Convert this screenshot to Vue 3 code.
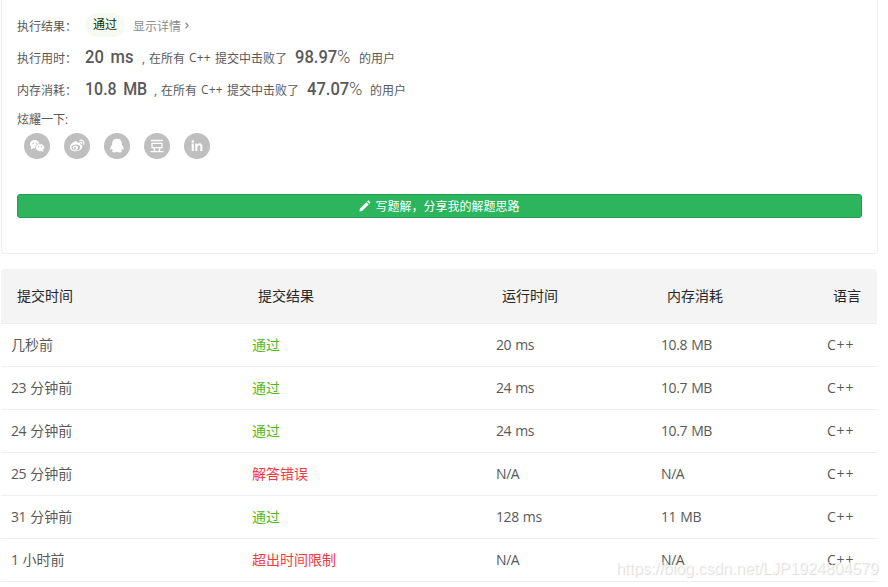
<script setup>
const stats = [
  { label: '执行用时：', value: '20 ms', percent: '98.97', cls: 'runtime' },
  { label: '内存消耗：', value: '10.8 MB', percent: '47.07', cls: 'memory' },
]

const rows = [
  { unit: '几秒前', ok: true, result: '通过', time: '20 ms', memory: '10.8 MB' },
  { num: '23', unit: '分钟前', ok: true, result: '通过', time: '24 ms', memory: '10.7 MB' },
  { num: '24', unit: '分钟前', ok: true, result: '通过', time: '24 ms', memory: '10.7 MB' },
  { num: '25', unit: '分钟前', ok: false, result: '解答错误', time: 'N/A', memory: 'N/A' },
  { num: '31', unit: '分钟前', ok: true, result: '通过', time: '128 ms', memory: '11 MB' },
  { num: '1', unit: '小时前', ok: false, result: '超出时间限制', time: 'N/A', memory: 'N/A' },
]
</script>

<template>
  <main class="page">
    <section class="card">
      <div class="line result">
        <span class="label">执行结果：</span>
        <span class="badge">通过</span>
        <a class="detail">显示详情
          <svg width="4" height="7" viewBox="0 0 4 7"><path d="M.6.8 3.2 3.5.6 6.2" fill="none" stroke="currentColor" stroke-width="1.3" /></svg>
        </a>
      </div>
      <div v-for="s in stats" :key="s.label" class="line stat" :class="s.cls">
        <span class="label">{{ s.label }}</span>
        <span class="value"><b>{{ s.value }}</b></span>
        <span class="comma">,</span>
        <span class="middle"><span>在所有</span><span class="lang">C++</span><span>提交中击败了</span></span>
        <span class="percent"><b>{{ s.percent }}</b><i>%</i></span>
        <span>的用户</span>
      </div>
      <div class="line flaunt">炫耀一下:</div>
      <div class="socials">
        <svg viewBox="0 0 26 26">
          <circle cx="13" cy="13" r="13" />
          <ellipse cx="10.7" cy="11.3" rx="4.8" ry="4.2" class="w" />
          <path d="m7.3 14-.7 2.6 3-1.6z" class="w" />
          <ellipse cx="16" cy="14.6" rx="4.6" ry="3.9" class="w edge" />
          <path d="m17 17.8 2.4 1.2-.5-2.3z" class="w" />
          <circle cx="9.2" cy="10.2" r=".7" /><circle cx="12.5" cy="10.2" r=".7" />
          <circle cx="14.5" cy="13.7" r=".6" /><circle cx="17.6" cy="13.7" r=".6" />
        </svg>
        <svg viewBox="0 0 26 26">
          <circle cx="13" cy="13" r="13" />
          <path class="w" d="M11.5 8.2c1.2-.3 2 .2 1.7 1.8 2-.8 3.8-.5 3.1 1.3 1.7.5 2.4 1.5 2.1 2.8-.5 2.3-3.2 4.1-6.7 4.1-3.4 0-5.8-1.5-5.8-3.8 0-2.7 3.1-5.7 5.6-6.2z" />
          <ellipse cx="11.8" cy="14.4" rx="4.3" ry="2.9" />
          <ellipse cx="11.4" cy="14.6" rx="2.6" ry="2.2" class="w" />
          <circle cx="10.9" cy="15" r="1" />
          <path class="s" d="M15.4 7.3c3-.7 5.2 1.5 4.3 4.3M15.8 9.3c1.4-.3 2.4.7 2 1.9" />
        </svg>
        <svg viewBox="0 0 26 26">
          <circle cx="13" cy="13" r="13" />
          <path class="w" d="M13 5.8c-3 0-4.8 1.8-4.8 4.5v1.2c-1.4 1.7-2.2 3.4-1.8 5 .3.5 1-.1 1.5-.8.2.8.6 1.4 1.1 1.9-.7.4-1 .8-.9 1.2.4.8 3.3.8 4.9 0 1.6.8 4.5.8 4.9 0 .1-.4-.2-.8-.9-1.2.5-.5.9-1.1 1.1-1.9.5.7 1.2 1.3 1.5.8.4-1.6-.4-3.3-1.8-5v-1.2c0-2.7-1.8-4.5-4.8-4.5z" />
        </svg>
        <svg viewBox="0 0 26 26">
          <circle cx="13" cy="13" r="13" />
          <path class="s bean" d="M7 7.5h12M8 10.4h10v4.3H8zM9.9 15.2l1.1 3M16.1 15.2l-1.1 3M6.5 18.6h13" />
        </svg>
        <svg viewBox="0 0 26 26">
          <circle cx="13" cy="13" r="13" />
          <path class="w" d="M7.7 10.5h2.1v7.5H7.7zM11.3 10.5h2.1v1c1.4-1.9 5-1.5 5 1.9V18h-2.1v-4.1c0-2.1-2.9-2-2.9.1v4h-2.1z" />
          <circle class="w" cx="8.75" cy="8.4" r="1.25" />
        </svg>
      </div>
      <button class="write">
        <svg width="12" height="12" viewBox="0 0 12 12"><path fill="#fff" d="m.8 8.8 6.6-6.6 2.3 2.3-6.6 6.6-2.6.4zM8.1 1.5l.7-.7c.4-.4.8-.4 1.2 0l1.1 1.1c.4.4.4.8 0 1.2l-.7.7z" /></svg>
        <span>写题解，分享我的解题思路</span>
      </button>
    </section>

    <section class="table">
      <div class="row head">
        <span>提交时间</span><span>提交结果</span><span>运行时间</span><span>内存消耗</span><span>语言</span>
      </div>
      <div v-for="(r, i) in rows" :key="i" class="row">
        <span class="ago"><span v-if="r.num" class="num">{{ r.num }}</span><span class="unit">{{ r.unit }}</span></span>
        <span :class="r.ok ? 'ok' : 'bad'">{{ r.result }}</span>
        <span class="num">{{ r.time }}</span>
        <span class="num">{{ r.memory }}</span>
        <span class="num cpp">C++</span>
      </div>
    </section>
    <div class="watermark">https://blog.csdn.net/LJP1924804579</div>
  </main>
</template>

<style>
body { background: #fff; overflow: hidden; }
</style>

<style scoped>
* { box-sizing: border-box; }
.page {
  position: relative;
  width: 888px;
  height: 587px;
  padding-left: 1px;
  overflow: hidden;
  font-family: "Open Sans", "Noto Sans CJK SC", sans-serif;
  color: #595959;
}
.card {
  width: 877px;
  height: 254px;
  padding: 9px 15px 0;
  border: 1px solid #eee;
  border-top: 0;
  border-radius: 0 0 4px 4px;
  font-size: 12px;
}
.line { display: flex; align-items: center; height: 32px; white-space: nowrap; }
.label { width: 68px; flex: none; }
.badge {
  width: 40px;
  height: 24px;
  border-radius: 12px;
  background: #f6faf3;
  color: #0d3300;
  line-height: 24px;
  text-align: center;
}
.detail { display: flex; align-items: center; gap: 4px; margin-left: 8px; color: #8c8c8c; }
.result .label, .detail { padding-top: 1px; }
.value b, .percent b, .percent i {
  display: inline-block;
  font-family: Roboto, sans-serif;
  font-size: 19px;
  font-style: normal;
  font-weight: 500;
  line-height: 28px;
  transform-origin: 0 50%;
}
.value, .percent { height: 30px; }
.value { width: 57px; flex: none; }
.value b { word-spacing: 3px; transform: scaleX(.87); }
.memory .value { width: 69px; }
.memory .value b { transform: scaleX(.84); }
.comma { width: 7px; }
.middle { display: flex; gap: 4px; width: 146px; flex: none; }
.lang { width: 22px; font-size: 12px; letter-spacing: .2px; }
.percent { display: flex; width: 64px; flex: none; }
.memory .percent { width: 63px; }
.percent b { width: 42px; transform: scaleX(.87); }
.percent i { font-weight: 300; transform: scaleX(.95); }
.result { height: 32px; }
.stat { padding-top: 2px; }
.flaunt { height: 28px; }
.socials { display: flex; gap: 14px; padding-left: 7px; }
.socials svg { width: 26px; height: 26px; fill: #bfbfbf; }
.socials .w { fill: #fff; }
.socials .edge { stroke: #bfbfbf; stroke-width: .7; }
.socials .s { fill: none; stroke: #fff; stroke-width: 1.2; }
.socials .bean { stroke-width: 1.3; stroke-linejoin: round; }
.write {
  display: flex;
  align-items: center;
  justify-content: center;
  gap: 4px;
  width: 845px;
  height: 24px;
  margin-top: 35px;
  padding: 0;
  border: 1px solid #269b4d;
  border-radius: 3px;
  background: #2db55d;
  color: #fff;
  font: 12px/22px "Open Sans", "Noto Sans CJK SC", sans-serif;
}
.write span { padding-top: 1px; }
.table { width: 876px; margin-top: 15px; font-size: 14px; }
.row {
  display: grid;
  grid-template-columns: 241px 244px 165px 166px 1fr;
  align-items: center;
  height: 43px;
  padding-left: 10px;
  border-bottom: 1px solid #eee;
  white-space: nowrap;
}
.ok, .bad, .unit, .head span { padding-bottom: 2px; }
.head {
  height: 55px;
  padding-left: 16px;
  border-radius: 4px 4px 0 0;
  background: #f4f4f4;
  color: #262626;
}
.ago { display: flex; align-items: center; gap: 4px; }
.num { padding-bottom: 1px; font-size: 14px; letter-spacing: -.4px; word-spacing: .8px; }
.ok { color: #52b81a; }
.bad { color: #f5393f; }
.row .cpp { letter-spacing: .8px; }
.watermark {
  position: absolute;
  left: 616px;
  top: 559px;
  font: 16px/20px "Liberation Sans", sans-serif;
  letter-spacing: -.05px;
  color: rgba(255, 255, 255, .6);
  text-shadow: 1px 1px 1px rgba(0, 0, 0, .15);
  white-space: nowrap;
}
</style>
